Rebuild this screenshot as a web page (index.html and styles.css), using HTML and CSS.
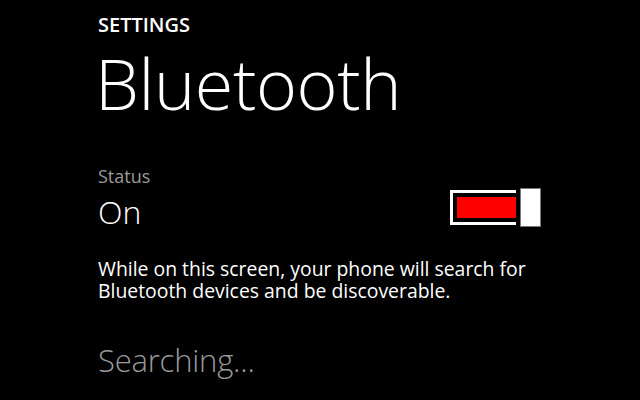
FILE: index.html
```html
<!DOCTYPE html>
<html>
<head>
<meta charset="utf-8">
<link rel="stylesheet" href="styles.css">
</head>
<body>
<div class="page">
  <div class="app-title">SETTINGS</div>
  <div class="page-title">Bluetooth</div>
  <div class="status-row">
    <div class="status-text">
      <div class="status-label">Status</div>
      <div class="status-value">On</div>
    </div>
    <div class="toggle">
      <div class="track"><div class="fill"></div></div>
      <div class="thumb"></div>
    </div>
  </div>
  <div class="desc">While on this screen, your phone will search for Bluetooth devices and be discoverable.</div>
  <div class="searching">Searching...</div>
</div>
</body>
</html>
```
FILE: styles.css
```css
html, body {
  margin: 0;
  padding: 0;
  background: #000;
}
body {
  width: 640px;
  height: 400px;
  overflow: hidden;
  font-family: "Open Sans", "Noto Sans", sans-serif;
  color: #fff;
}
.page {
  padding: 12px 0 0 98px;
}
.app-title {
  font-size: 20px;
  font-weight: 600;
  line-height: 26px;
}
.page-title {
  font-size: 70px;
  font-weight: 300;
  line-height: 80px;
  margin-top: 5px;
  margin-left: -3px;
  letter-spacing: -0.4px;
}
.status-row {
  display: flex;
  align-items: flex-start;
  justify-content: space-between;
  margin-top: 41px;
  width: 443px;
}
.status-label {
  font-size: 18px;
  color: #9a9a9a;
  line-height: 24px;
}
.status-value {
  font-size: 32px;
  font-weight: 300;
  line-height: 40px;
  margin-top: 4px;
}
.toggle {
  display: flex;
  align-items: center;
  margin-top: 24px;
}
.track {
  box-sizing: border-box;
  width: 66px;
  height: 35px;
  border: 3px solid #fff;
  border-right: none;
  padding: 4px 0 4px 4px;
  margin-right: 4px;
}
.fill {
  height: 21px;
  background: #f00;
}
.thumb {
  box-sizing: border-box;
  width: 21px;
  height: 39px;
  background: #fff;
  border: 1px solid #777;
}
.desc {
  width: 440px;
  font-size: 19.4px;
  line-height: 22px;
  margin-top: 26px;
}
.searching {
  font-size: 31px;
  font-weight: 300;
  line-height: 40px;
  letter-spacing: -0.2px;
  color: #9a9a9a;
  margin-top: 38px;
}
```
